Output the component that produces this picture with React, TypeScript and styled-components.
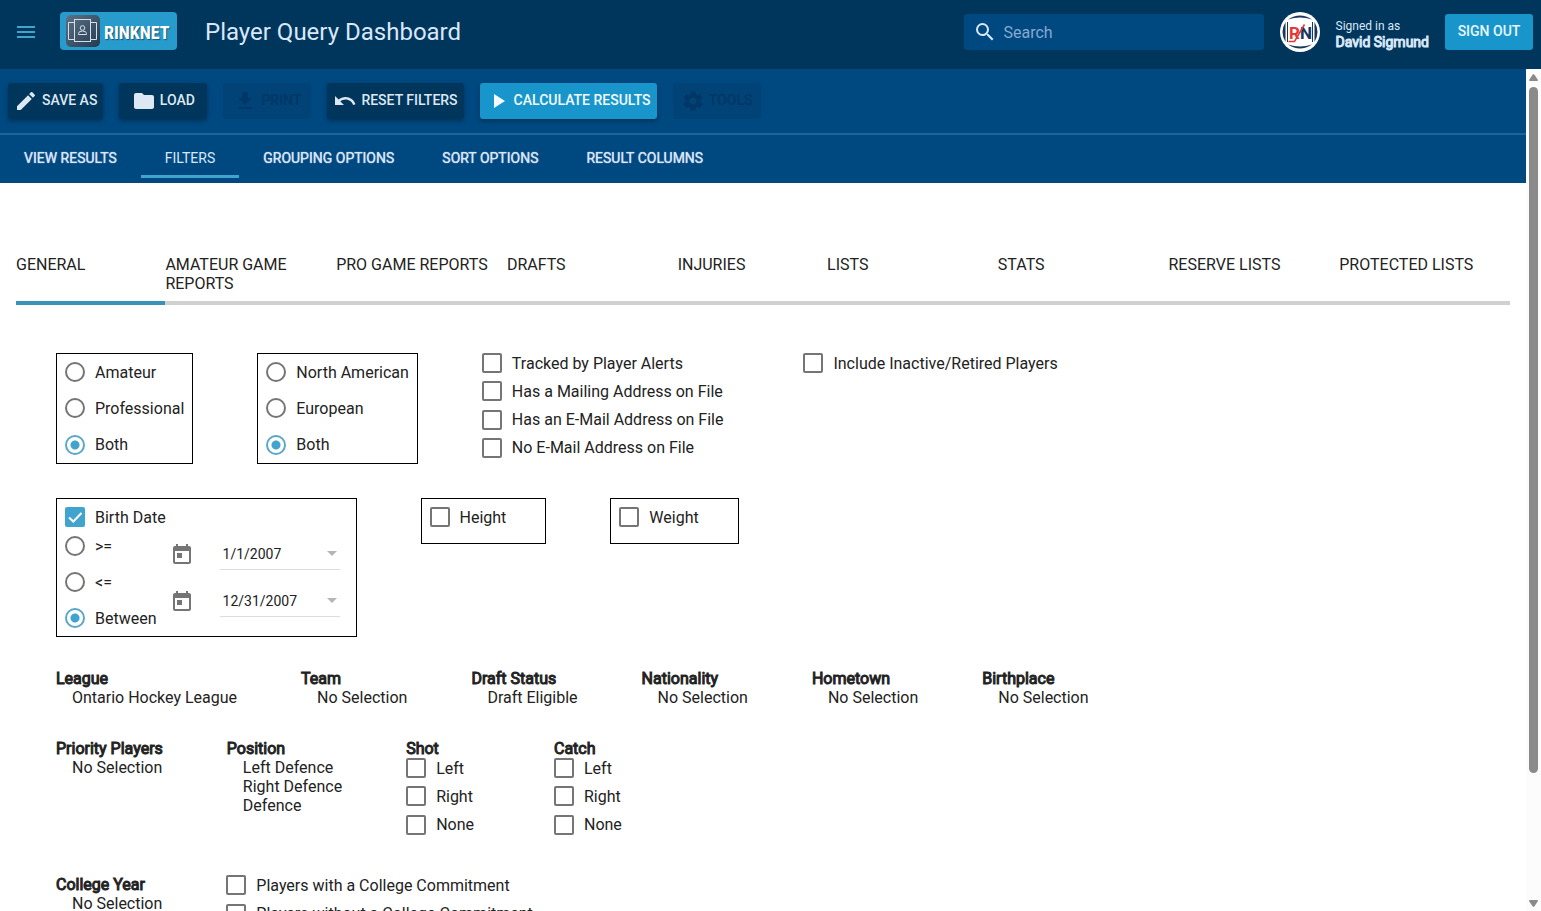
import React, { useState } from 'react';
import styled, { createGlobalStyle } from 'styled-components';
import {
  MdMenu,
  MdEdit,
  MdFolder,
  MdFileDownload,
  MdUndo,
  MdPlayArrow,
  MdSettings,
  MdSearch,
  MdToday,
} from 'react-icons/md';

const color = {
  header: '#00355c',
  bar: '#004880',
  divider: '#1c649c',
  accent: '#1896cb',
  control: '#40a4cf',
  line: '#3893b7',
  pale: '#d9e8f8',
  ink: '#222222',
  grey: '#757575',
};

const GlobalStyle = createGlobalStyle`
  * { box-sizing: border-box; }
  body {
    margin: 0;
    background: #fff;
    color: ${color.ink};
    font: 400 16px/19px Roboto, "Liberation Sans", sans-serif;
  }
  button, input { font: inherit; color: inherit; }
  button { border: 0; padding: 0; background: none; cursor: pointer; }
  fieldset { border: 0; margin: 0; padding: 0; min-width: 0; }
`;

const Page = styled.div`
  display: flex;
  flex-direction: column;
  height: 100vh;
  overflow: hidden;
`;

/* Header */

const Header = styled.header`
  display: flex;
  align-items: flex-start;
  flex: none;
  padding: 12px 8px 17px 14px;
  background: ${color.header};
  color: ${color.pale};
`;

const MenuButton = styled.button`
  display: flex;
  align-items: center;
  height: 40px;
  color: ${color.control};
`;

const Logo = styled.a`
  display: flex;
  align-items: center;
  gap: 4px;
  width: 117px;
  height: 38px;
  margin: 0 28px 0 22px;
  padding: 0 6px;
  border-radius: 4px;
  background: #289bcd;
  color: #fff;
  text-decoration: none;
  & > svg {
    flex: none;
  }
`;

const LogoText = styled.span`
  padding-top: 4px;
  font: 700 18px/34px "Roboto Condensed", "Liberation Sans Narrow", Roboto, sans-serif;
  text-shadow: 1px 1px 1px #17567a;
`;

const Title = styled.h1`
  flex: 1;
  margin: 0;
  font-size: 24px;
  font-weight: 400;
  line-height: 40px;
`;

const SearchBox = styled.label`
  display: flex;
  align-items: center;
  gap: 7px;
  width: 300px;
  height: 36px;
  margin: 2px 16px 0 0;
  padding: 0 9px;
  border-radius: 3px;
  background: ${color.bar};
`;

const SearchInput = styled.input`
  flex: 1;
  min-width: 0;
  border: 0;
  padding: 0;
  outline: 0;
  background: none;
  &::placeholder {
    color: #86a9d0;
    opacity: 1;
  }
`;

const Account = styled.div`
  margin: 6px 16px 0;
  font-size: 12px;
  line-height: 16px;
`;

const UserName = styled.div`
  font-size: 14px;
  -webkit-text-stroke: 1px currentColor;
`;

const SignOut = styled.button`
  width: 88px;
  height: 36px;
  margin-top: 2px;
  padding-bottom: 2px;
  border-radius: 3px;
  background: ${color.accent};
  color: #e8f6ff;
  font-size: 14px;
  font-weight: 500;
`;

/* Body */

const Body = styled.div`
  display: flex;
  flex: 1;
  min-height: 0;
`;

const Main = styled.main`
  flex: 1;
  min-width: 0;
  overflow: hidden;
`;

const Toolbar = styled.div`
  display: flex;
  gap: 16px;
  padding: 14px 8px;
  border-bottom: 2px solid ${color.divider};
  background: ${color.bar};
`;

const ToolButton = styled.button<{ $primary?: boolean }>`
  display: flex;
  align-items: center;
  justify-content: center;
  gap: 4px;
  min-width: 88px;
  height: 36px;
  padding: 0 6px;
  border-radius: 3px;
  background: ${(p) => (p.$primary ? color.accent : color.header)};
  color: ${(p) => (p.$primary ? '#f4fbff' : '#dde8f2')};
  font-size: 14px;
  font-weight: 500;
  white-space: nowrap;
  box-shadow: 0 2px 4px rgba(0, 0, 0, 0.3);
  &:disabled {
    background: #014277;
    color: #003766;
    box-shadow: none;
  }
`;

const ButtonText = styled.span`
  padding-bottom: 2px;
`;

const ViewTabs = styled.nav`
  display: flex;
  padding-bottom: 5px;
  background: ${color.bar};
`;

const ViewTab = styled.button<{ $active: boolean }>`
  height: 43px;
  padding: 6px 24px 0;
  border-bottom: 3px solid ${(p) => (p.$active ? color.control : 'transparent')};
  color: ${color.pale};
  font-size: 14px;
  text-shadow: ${(p) => (p.$active ? 'none' : '0 0 1px currentColor')};
`;

const FilterTabs = styled.nav`
  display: grid;
  grid-template-columns: 7fr 8fr 8fr 8fr 7fr 8fr 8fr 8fr 8fr;
  margin: 72px 16px 0;
`;

const FilterTab = styled.button<{ $active: boolean }>`
  display: flex;
  padding-bottom: 8px;
  border-bottom: 4px solid ${(p) => (p.$active ? color.line : '#d0d0d0')};
  text-align: left;
`;

const Filters = styled.form`
  display: flex;
  flex-direction: column;
  gap: 32px;
  padding: 48px 56px;
`;

const FilterRow = styled.div`
  display: flex;
  align-items: flex-start;
  gap: 64px;
`;

const Box = styled.fieldset`
  && {
    padding: 0 8px;
    border: 1px solid #000;
  }
`;

const RadioRows = styled.div`
  display: grid;
  grid-auto-rows: 1fr;
  min-height: 109px;
`;

const SizeBox = styled(Box)`
  && {
    padding: 8px 39px 16px 8px;
  }
`;

const BirthBox = styled(Box)`
  && {
    display: flex;
    flex-direction: column;
    gap: 1px;
    padding: 8px 16px 0 8px;
  }
`;

const BirthRange = styled.div`
  display: flex;
  gap: 13px;
`;

const RadioList = styled.div`
  display: grid;
  grid-auto-rows: 36px;
`;

const Choice = styled.label`
  display: flex;
  align-items: center;
  gap: 10px;
  min-height: 20px;
  white-space: nowrap;
`;

const Radio = styled.input`
  appearance: none;
  flex: none;
  width: 20px;
  height: 20px;
  margin: 0;
  border: 2px solid ${color.grey};
  border-radius: 50%;
  &:checked {
    border-color: #5ba7c9;
    background: radial-gradient(circle, ${color.control} 4px, #fff 5px);
  }
`;

const CheckMark = styled.span`
  display: grid;
  flex: none;
  width: 20px;
  height: 20px;
  & > * {
    grid-area: 1 / 1;
  }
  & > svg {
    visibility: hidden;
    pointer-events: none;
  }
  & > input:checked + svg {
    visibility: visible;
  }
`;

const CheckInput = styled.input`
  appearance: none;
  width: 20px;
  height: 20px;
  margin: 0;
  border: 2px solid ${color.grey};
  border-radius: 2px;
  &:checked {
    border-color: ${color.control};
    background: ${color.control};
  }
`;

const CheckList = styled.div<{ $height: number }>`
  display: grid;
  grid-auto-rows: 1fr;
  align-items: start;
  min-height: ${(p) => p.$height}px;
  padding-right: 16px;
`;

const DateList = styled.div`
  display: flex;
  flex-direction: column;
  gap: 15px;
  padding-top: 10px;
`;

const DateRow = styled.div`
  display: flex;
  gap: 26px;
`;

const CalendarButton = styled.button`
  display: flex;
  align-items: center;
  padding-top: 2px;
  color: ${color.grey};
`;

const DateField = styled.div`
  display: flex;
  align-items: center;
  width: 120px;
  height: 32px;
  border-bottom: 1px solid #dcdcdc;
`;

const DateInput = styled.input`
  flex: 1;
  min-width: 0;
  border: 0;
  padding: 2px 0 0 3px;
  outline: 0;
  font-size: 14px;
`;

const DropButton = styled.button`
  display: flex;
  justify-content: center;
  width: 16px;
`;

const GroupTitle = styled.div`
  -webkit-text-stroke: 1px currentColor;
`;

const GroupValue = styled.div`
  padding-left: 16px;
`;

/* Scroll bar */

const ScrollBar = styled.div`
  display: flex;
  flex-direction: column;
  align-items: center;
  flex: none;
  width: 15px;
  padding: 5px 0 4px;
  background: #fcfcfc;
`;

const ScrollTrack = styled.div`
  display: flex;
  flex: 1;
  margin: 6px 0;
`;

const ScrollThumb = styled.div`
  width: 9px;
  height: 85%;
  border-radius: 5px;
  background: #8a8a8a;
`;

const Arrow = ({ down }: { down?: boolean }) => (
  <svg width="9" height="7" viewBox="0 0 9 7" fill="#8a8a8a" aria-hidden="true">
    <path d={down ? 'M0 1Q0 0 1 0H8Q9 0 9 1L5.3 6.4Q4.5 7.2 3.7 6.4Z' : 'M0 6Q0 7 1 7H8Q9 7 9 6L5.3 .6Q4.5 -.2 3.7 .6Z'} />
  </svg>
);

const LogoMark = () => (
  <svg width="34" height="34" viewBox="0 0 34 34" fill="none" aria-hidden="true">
    <defs>
      <linearGradient id="mark" x1="0" y1="0" x2="1" y2="1">
        <stop offset="0" stopColor="#5d7285" />
        <stop offset="1" stopColor="#243a52" />
      </linearGradient>
    </defs>
    <rect x="0" y="1" width="34" height="32" rx="5" fill="url(#mark)" />
    <g stroke="#d6dee6" strokeWidth="1">
      <path d="M8.5 8.5H2.5V25.5H8.5M24.5 8.5H30.5V25.5H24.5" />
      <rect x="8.5" y="5.5" width="16" height="22" />
      <circle cx="16.5" cy="14" r="2.3" />
      <path d="M12.5 20.5V19.5Q12.5 17 16.5 17Q20.5 17 20.5 19.5V20.5Z" />
    </g>
  </svg>
);

const Avatar = () => (
  <svg width="40" height="40" viewBox="0 0 40 40" role="img" aria-label="RinkNet">
    <circle cx="20" cy="20" r="20" fill="#fff" />
    <g fill="#17375f">
      <path d="M8 7.5Q20 -.5 32 7.5Q20 3.5 8 7.5Z" />
      <path d="M8 32.5Q20 40.5 32 32.5Q20 36.5 8 32.5Z" />
      <path d="M5.5 10Q-.5 20 5.5 30Z" />
      <path d="M34.5 10Q40.5 20 34.5 30Z" />
      <rect x="7" y="10" width="1" height="20" />
      <rect x="32" y="10" width="1" height="20" />
    </g>
    <text x="9" y="27" fontFamily="Roboto, sans-serif" fontSize="17" fontWeight="700" fill="#e23a36">R</text>
    <text x="20" y="27" fontFamily="Roboto, sans-serif" fontSize="17" fontWeight="700" fill="#17375f">N</text>
    <path d="M8.5 29.5H14.5L24.5 12.5" fill="none" stroke="#e23a36" strokeWidth="1.5" />
  </svg>
);

const Check = ({ label, checked }: { label: string; checked?: boolean }) => (
  <Choice>
    <CheckMark>
      <CheckInput type="checkbox" defaultChecked={checked} />
      <svg width="20" height="20" viewBox="0 0 20 20" fill="none" stroke="#fff" strokeWidth="2" aria-hidden="true">
        <path d="M4 10.5L8.3 14.5L16.5 6" />
      </svg>
    </CheckMark>
    {label}
  </Choice>
);

const Radios = ({ name, options, selected }: { name: string; options: string[]; selected: string }) => (
  <>
    {options.map((option) => (
      <Choice key={option}>
        <Radio type="radio" name={name} defaultChecked={option === selected} />
        {option}
      </Choice>
    ))}
  </>
);

const DatePicker = ({ label, value }: { label: string; value: string }) => (
  <DateRow>
    <CalendarButton type="button" aria-label={`Open calendar, ${label}`}>
      <MdToday size={24} />
    </CalendarButton>
    <DateField>
      <DateInput aria-label={label} defaultValue={value} />
      <DropButton type="button" aria-label={`Choose ${label}`}>
        <svg width="10" height="5" viewBox="0 0 10 5" fill="#b5b5b5" aria-hidden="true">
          <path d="M0 0H10L5 5Z" />
        </svg>
      </DropButton>
    </DateField>
  </DateRow>
);

const Group = ({ title, values = [], children }: { title: string; values?: string[]; children?: React.ReactNode }) => (
  <div>
    <GroupTitle>{title}</GroupTitle>
    {values.map((value) => (
      <GroupValue key={value}>{value}</GroupValue>
    ))}
    {children}
  </div>
);

const tools = [
  { label: 'SAVE AS', Icon: MdEdit },
  { label: 'LOAD', Icon: MdFolder },
  { label: 'PRINT', Icon: MdFileDownload, disabled: true },
  { label: 'RESET FILTERS', Icon: MdUndo },
  { label: 'CALCULATE RESULTS', Icon: MdPlayArrow, primary: true },
  { label: 'TOOLS', Icon: MdSettings, disabled: true },
];

const views = ['VIEW RESULTS', 'FILTERS', 'GROUPING OPTIONS', 'SORT OPTIONS', 'RESULT COLUMNS'];

const filterPages = [
  'GENERAL',
  'AMATEUR GAME REPORTS',
  'PRO GAME REPORTS',
  'DRAFTS',
  'INJURIES',
  'LISTS',
  'STATS',
  'RESERVE LISTS',
  'PROTECTED LISTS',
];

const hands = ['Left', 'Right', 'None'];

export default function App() {
  const [view, setView] = useState('FILTERS');
  const [page, setPage] = useState('GENERAL');

  return (
    <Page>
      <GlobalStyle />
      <Header>
        <MenuButton aria-label="Menu">
          <MdMenu size={24} />
        </MenuButton>
        <Logo href="#">
          <LogoMark />
          <LogoText>RINKNET</LogoText>
        </Logo>
        <Title>Player Query Dashboard</Title>
        <SearchBox>
          <MdSearch size={24} />
          <SearchInput type="text" placeholder="Search" aria-label="Search" />
        </SearchBox>
        <Avatar />
        <Account>
          Signed in as
          <UserName>David Sigmund</UserName>
        </Account>
        <SignOut>SIGN OUT</SignOut>
      </Header>

      <Body>
        <Main>
          <Toolbar>
            {tools.map(({ label, Icon, disabled, primary }) => (
              <ToolButton key={label} disabled={disabled} $primary={primary}>
                <Icon size={24} />
                <ButtonText>{label}</ButtonText>
              </ToolButton>
            ))}
          </Toolbar>

          <ViewTabs>
            {views.map((name) => (
              <ViewTab key={name} $active={name === view} onClick={() => setView(name)}>
                {name}
              </ViewTab>
            ))}
          </ViewTabs>

          <FilterTabs>
            {filterPages.map((name) => (
              <FilterTab key={name} $active={name === page} onClick={() => setPage(name)}>
                {name}
              </FilterTab>
            ))}
          </FilterTabs>

          <Filters>
            <FilterRow>
              <Box aria-label="Level">
                <RadioRows>
                  <Radios name="level" options={['Amateur', 'Professional', 'Both']} selected="Both" />
                </RadioRows>
              </Box>
              <Box aria-label="Origin">
                <RadioRows>
                  <Radios name="origin" options={['North American', 'European', 'Both']} selected="Both" />
                </RadioRows>
              </Box>
              <CheckList $height={113}>
                <Check label="Tracked by Player Alerts" />
                <Check label="Has a Mailing Address on File" />
                <Check label="Has an E-Mail Address on File" />
                <Check label="No E-Mail Address on File" />
              </CheckList>
              <Check label="Include Inactive/Retired Players" />
            </FilterRow>

            <FilterRow>
              <BirthBox aria-label="Birth date">
                <Check label="Birth Date" checked />
                <BirthRange>
                  <RadioList>
                    <Radios name="birth" options={['>=', '<=', 'Between']} selected="Between" />
                  </RadioList>
                  <DateList>
                    <DatePicker label="start date" value="1/1/2007" />
                    <DatePicker label="end date" value="12/31/2007" />
                  </DateList>
                </BirthRange>
              </BirthBox>
              <SizeBox aria-label="Height">
                <Check label="Height" />
              </SizeBox>
              <SizeBox aria-label="Weight">
                <Check label="Weight" />
              </SizeBox>
            </FilterRow>

            <FilterRow>
              <Group title="League" values={['Ontario Hockey League']} />
              <Group title="Team" values={['No Selection']} />
              <Group title="Draft Status" values={['Draft Eligible']} />
              <Group title="Nationality" values={['No Selection']} />
              <Group title="Hometown" values={['No Selection']} />
              <Group title="Birthplace" values={['No Selection']} />
            </FilterRow>

            <FilterRow>
              <Group title="Priority Players" values={['No Selection']} />
              <Group title="Position" values={['Left Defence', 'Right Defence', 'Defence']} />
              <Group title="Shot">
                <CheckList $height={85}>
                  {hands.map((hand) => <Check key={hand} label={hand} />)}
                </CheckList>
              </Group>
              <Group title="Catch">
                <CheckList $height={85}>
                  {hands.map((hand) => <Check key={hand} label={hand} />)}
                </CheckList>
              </Group>
            </FilterRow>

            <FilterRow>
              <Group title="College Year" values={['No Selection']} />
              <CheckList $height={57}>
                <Check label="Players with a College Commitment" />
                <Check label="Players without a College Commitment" />
              </CheckList>
            </FilterRow>
          </Filters>
        </Main>

        <ScrollBar aria-hidden="true">
          <Arrow />
          <ScrollTrack>
            <ScrollThumb />
          </ScrollTrack>
          <Arrow down />
        </ScrollBar>
      </Body>
    </Page>
  );
}
